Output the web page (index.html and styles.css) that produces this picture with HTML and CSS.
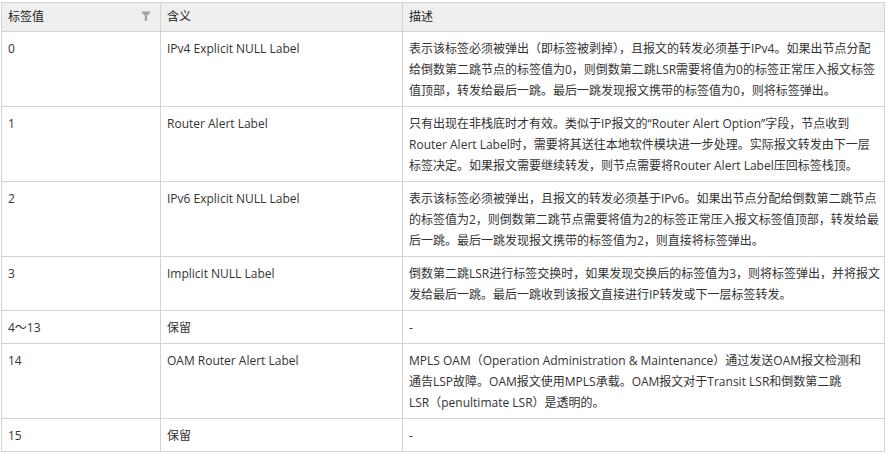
FILE: index.html
```html
<!DOCTYPE html>
<html lang="zh-CN">
<head>
<meta charset="utf-8">
<title>MPLS 特殊标签</title>
<link rel="stylesheet" href="styles.css">
</head>
<body>
<table class="tbl">
  <colgroup>
    <col class="c1"><col class="c2"><col class="c3">
  </colgroup>
  <thead>
    <tr>
      <th><div class="th-inner"><span>标签值</span><svg class="filter" width="8" height="10" viewBox="0 0 8 10"><path d="M0 0.5h8v1.5l-2.8 2.6v4.9l-2.4 0.8v-5.7l-2.8-2.6z" fill="#a3a3a3"/></svg></div></th>
      <th>含义</th>
      <th>描述</th>
    </tr>
  </thead>
  <tbody>
    <tr>
      <td>0</td>
      <td>IPv4 Explicit NULL Label</td>
      <td class="desc">表示该标签必须被弹出（即标签被剥掉），且报文的转发必须基于IPv4。如果出节点分配<br>给倒数第二跳节点的标签值为0，则倒数第二跳LSR需要将值为0的标签正常压入报文标签<br>值顶部，转发给最后一跳。最后一跳发现报文携带的标签值为0，则将标签弹出。</td>
    </tr>
    <tr>
      <td>1</td>
      <td>Router Alert Label</td>
      <td class="desc">只有出现在非栈底时才有效。类似于IP报文的“Router Alert Option”字段，节点收到<br>Router Alert Label时，需要将其送往本地软件模块进一步处理。实际报文转发由下一层<br>标签决定。如果报文需要继续转发，则节点需要将Router Alert Label压回标签栈顶。</td>
    </tr>
    <tr>
      <td>2</td>
      <td>IPv6 Explicit NULL Label</td>
      <td class="desc">表示该标签必须被弹出，且报文的转发必须基于IPv6。如果出节点分配给倒数第二跳节点<br>的标签值为2，则倒数第二跳节点需要将值为2的标签正常压入报文标签值顶部，转发给最<br>后一跳。最后一跳发现报文携带的标签值为2，则直接将标签弹出。</td>
    </tr>
    <tr>
      <td>3</td>
      <td>Implicit NULL Label</td>
      <td class="desc">倒数第二跳LSR进行标签交换时，如果发现交换后的标签值为3，则将标签弹出，并将报文<br>发给最后一跳。最后一跳收到该报文直接进行IP转发或下一层标签转发。</td>
    </tr>
    <tr>
      <td>4～13</td>
      <td>保留</td>
      <td>-</td>
    </tr>
    <tr>
      <td>14</td>
      <td>OAM Router Alert Label</td>
      <td class="desc">MPLS OAM（Operation Administration &amp; Maintenance）通过发送OAM报文检测和<br>通告LSP故障。OAM报文使用MPLS承载。OAM报文对于Transit LSR和倒数第二跳<br>LSR（penultimate LSR）是透明的。</td>
    </tr>
    <tr>
      <td>15</td>
      <td>保留</td>
      <td>-</td>
    </tr>
  </tbody>
</table>
</body>
</html>
```

FILE: styles.css
```css
html, body {
  margin: 0;
  padding: 0;
  background: #ffffff;
}
body {
  padding: 2px 0 0 1px;
  font-family: "Open Sans", "Noto Sans CJK SC", sans-serif;
  font-size: 12px;
  color: #333333;
}
.tbl {
  border-collapse: collapse;
  table-layout: fixed;
  width: 883px;
}
.c1 { width: 159px; }
.c2 { width: 242px; }
.c3 { width: 482px; }
.tbl th, .tbl td {
  border: 1px solid #d3d3d3;
  text-align: left;
  vertical-align: top;
  line-height: 21px;
  font-weight: normal;
}
.tbl th {
  background: #efefef;
  padding: 3px 6px 4px 6px;
  color: #222222;
}
.tbl td {
  padding: 6px 6px 5px 6px;
}
.tbl td.desc {
  white-space: nowrap;
  overflow: hidden;
  padding-right: 2px;
}
.th-inner {
  display: flex;
  align-items: center;
  justify-content: space-between;
}
.filter {
  display: block;
  margin-right: 4px;
  margin-top: -2px;
}
```
